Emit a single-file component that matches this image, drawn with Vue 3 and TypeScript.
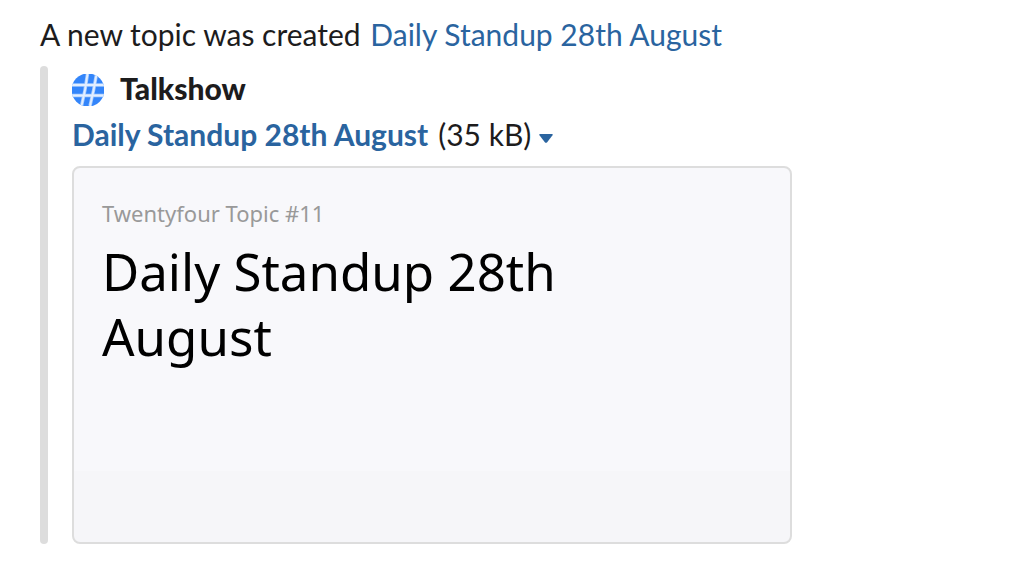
<script setup lang="ts">
import { ref } from 'vue'

const title = 'Daily Standup 28th August'
const expanded = ref(true)
</script>

<template>
  <main class="message">
    <p class="intro">A new topic was created <a href="#topic">{{ title }}</a></p>
    <section class="attachment">
      <header class="source">
        <svg class="logo" viewBox="0 0 32 32" aria-hidden="true">
          <defs>
            <clipPath id="disc"><circle cx="16" cy="16" r="16.5" /></clipPath>
          </defs>
          <g clip-path="url(#disc)" fill="none">
            <rect width="32" height="32" fill="#3385fa" />
            <path d="M0 11H32M0 21.5H32M15.5 0Q13.5 16 9.5 32M24.5 0Q22 16 18 32" stroke="#a5cbff" stroke-width="3.4" />
            <path d="M0 11H32M0 21.5H32M15.5 0Q13.5 16 9.5 32M24.5 0Q22 16 18 32" stroke="#e2eeff" stroke-width="1.8" />
          </g>
        </svg>
        <strong>Talkshow</strong>
      </header>
      <div class="file">
        <a class="name" href="#file">{{ title }}</a>
        <span>(35 kB)</span>
        <button type="button" aria-label="Toggle preview" :aria-expanded="expanded" @click="expanded = !expanded">
          <svg viewBox="0 0 14 9" aria-hidden="true"><path d="M1 0H13Q14.4 0 13.5 1.2L8.2 8.2Q7 9.4 5.8 8.2L.5 1.2Q-.4 0 1 0Z" fill="#2a649f" /></svg>
        </button>
      </div>
      <article v-if="expanded" class="card">
        <p class="label">Twentyfour Topic #11</p>
        <h1>{{ title }}</h1>
      </article>
    </section>
  </main>
</template>

<style>
body {
  margin: 0;
  background: #fff;
}
</style>

<style scoped>
.message {
  padding: 14px 40px 38px;
  color: #1d1c1d;
  font: 30px/40px Lato, sans-serif;
}
p,
h1 {
  margin: 0;
}
a {
  color: #2a649f;
  text-decoration: none;
}
.intro a {
  margin-left: 2px;
}
.attachment {
  position: relative;
  margin-top: 12px;
  padding-left: 32px;
}
.attachment::before {
  content: '';
  position: absolute;
  left: 0;
  top: 0;
  bottom: 0;
  width: 8px;
  border-radius: 4px;
  background: #ddd;
}
.source {
  display: flex;
  align-items: flex-start;
  gap: 16px;
  padding: 8px 0;
}
.source strong {
  font-weight: 900;
  line-height: 28px;
}
.logo {
  width: 32px;
  height: 32px;
}
.file {
  display: flex;
  align-items: center;
  gap: 8px;
  height: 40px;
  margin-bottom: 12px;
}
.name {
  margin-right: 2px;
  font-weight: 700;
}
button {
  display: flex;
  padding: 8px 0 0;
  border: 0;
  background: none;
  cursor: pointer;
}
button svg {
  width: 14px;
  height: 9px;
}
.card {
  box-sizing: border-box;
  max-width: 720px;
  min-height: 378px;
  padding: 30px 28px;
  border: 2px solid #ddd;
  border-radius: 8px;
  background: linear-gradient(#f8f8fb 81%, #f6f6f9 81%);
}
.label {
  color: #999;
  font: 22px/30px "Noto Sans", sans-serif;
}
h1 {
  max-width: 560px;
  margin-top: 11px;
  color: #000;
  font: 400 51px/65px "Noto Sans", sans-serif;
}
</style>
